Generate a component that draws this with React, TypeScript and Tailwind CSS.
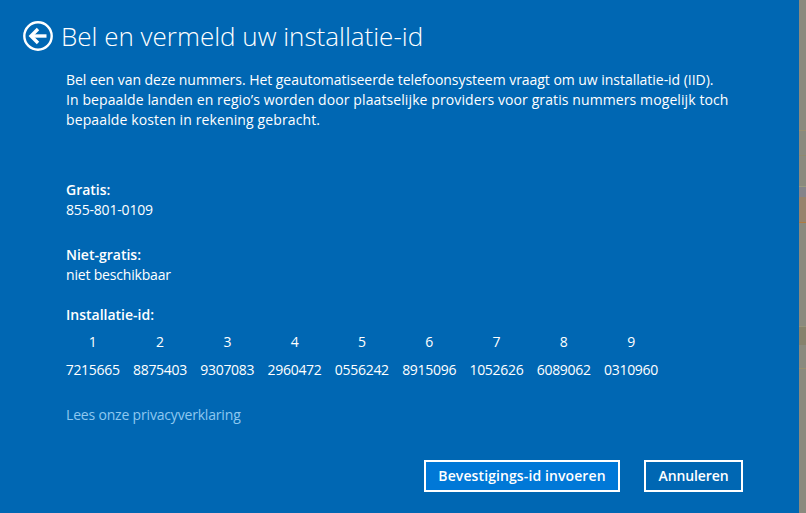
const groups = ["7215665", "8875403", "9307083", "2960472", "0556242", "8915096", "1052626", "6089062", "0310960"];

function BackIcon() {
  return (
    <svg width="30" height="30" viewBox="0 0 30 30" fill="none" stroke="white">
      <circle cx="15" cy="15" r="13.7" strokeWidth="2.4" />
      <path d="M23.5 15H8" strokeWidth="3.4" />
      <path d="M15 8L8 15L15 22" strokeWidth="3.4" />
    </svg>
  );
}

export default function App() {
  return (
    <div className="flex h-[513px] w-[806px] overflow-hidden font-['Open_Sans',sans-serif] text-white">
      <div className="flex w-[799px] flex-col bg-[#0067b3]">
        {/* Header */}
        <div className="flex items-center gap-[8px] pl-[23px] pt-[21px]">
          <BackIcon />
          <h1 className="text-[26px] leading-[30px] font-light">Bel en vermeld uw installatie-id</h1>
        </div>

        <div className="flex flex-1 flex-col pl-[66px] text-[14px] leading-[20px] tracking-[-0.18px]">
          <div className="mt-[19px] w-[700px] whitespace-nowrap">
            <p className="tracking-[-0.04px]">Bel een van deze nummers. Het geautomatiseerde telefoonsysteem vraagt om uw installatie-id (IID).</p>
            <p className="tracking-[0.1px]">In bepaalde landen en regio’s worden door plaatselijke providers voor gratis nummers mogelijk toch</p>
            <p className="tracking-[0.12px]">bepaalde kosten in rekening gebracht.</p>
          </div>

          <div className="mt-[49px]">
            <p className="font-semibold leading-[21px] tracking-normal">Gratis:</p>
            <p>855-801-0109</p>
          </div>

          <div className="mt-[24px]">
            <p className="font-semibold leading-[21px] tracking-normal">Niet-gratis:</p>
            <p>niet beschikbaar</p>
          </div>

          <p className="mt-[20px] font-semibold tracking-normal">Installatie-id:</p>
          <div className="-ml-[7px] mt-[7px] grid grid-cols-[repeat(9,67.3px)] gap-y-[8px] text-center tracking-[-0.3px]">
            {groups.map((_, i) => (
              <span key={i}>{i + 1}</span>
            ))}
            {groups.map((g) => (
              <span key={g}>{g}</span>
            ))}
          </div>

          <a className="mt-[25px] text-[#8ec8f0]">Lees onze privacyverklaring</a>

          {/* Actions */}
          <div className="mt-[35px] flex justify-end gap-[24px] pr-[56px]">
            <button className="h-[32px] w-[196px] border-[2px] border-white bg-[#0078d7] font-semibold tracking-[0.1px]">Bevestigings-id invoeren</button>
            <button className="h-[32px] w-[99px] border-[2px] border-white font-semibold tracking-[-0.1px]">Annuleren</button>
          </div>
        </div>
      </div>

      {/* Window behind the dialog */}
      <div className="flex w-[7px] flex-col bg-[#8a8a7e]">
        <div className="mt-[130px] h-px bg-[#9a8f70]" />
        <div className="mt-[24px] h-px bg-[#8f8a6e]" />
        <div className="mt-[30px] h-[11px] border-t border-[#9a9a80] bg-[#84848a]" />
        <div className="h-[26px] border-b border-[#b07a40] bg-[#96836c]" />
        <div className="mt-[103px] h-[19px] border-t border-[#96937a] bg-[#86826c]" />
        <div className="mt-[23px] h-px bg-[#9a8f70]" />
      </div>
    </div>
  );
}
